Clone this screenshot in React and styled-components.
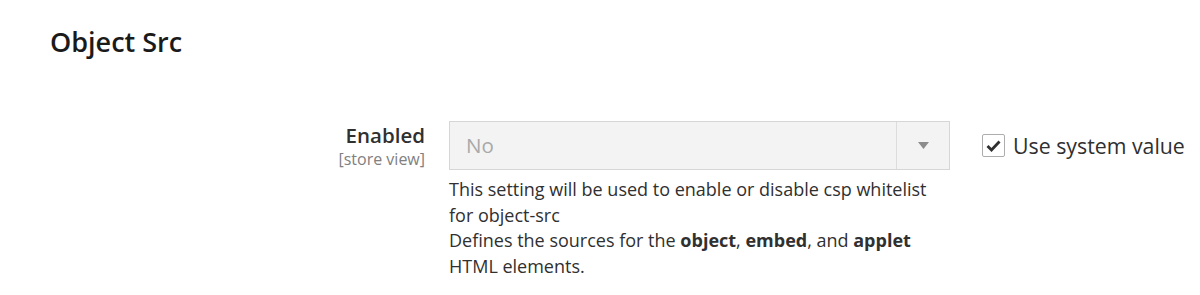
import React from 'react';
import styled, { createGlobalStyle } from 'styled-components';

const GlobalStyle = createGlobalStyle`
  body {
    margin: 0;
    background: #ffffff;
    font-family: "Open Sans", "Liberation Sans", sans-serif;
    color: #303030;
  }
`

const Section = styled.div`
  padding: 24px 0 0 50px;
`

const Title = styled.h2`
  margin: 0;
  font-size: 27px;
  font-weight: 600;
  line-height: 36px;
  color: #1a1a1a;
`

const FieldRow = styled.div`
  display: grid;
  grid-template-columns: 375px 501px auto;
  column-gap: 24px;
  margin-top: 61px;
`

const Label = styled.div`
  text-align: right;
`

const LabelText = styled.div`
  font-size: 20.5px;
  font-weight: 600;
  line-height: 28px;
  color: #303030;
`

const Scope = styled.div`
  font-size: 16px;
  line-height: 20px;
  color: #808080;
`

const Control = styled.div`
  display: flex;
  flex-direction: column;
`

const Select = styled.div`
  display: flex;
  height: 49px;
  box-sizing: border-box;
  border: 1px solid #d6d6d6;
  background: #f3f3f3;
`

const SelectValue = styled.div`
  flex: 1;
  padding-left: 16px;
  font-size: 20.5px;
  line-height: 47px;
  color: #a9a9a9;
`

const SelectArrow = styled.div`
  width: 52px;
  border-left: 1px solid #dcdcdc;
  display: flex;
  align-items: center;
  justify-content: center;
`

const Note = styled.div`
  margin-top: 7px;
  font-size: 18px;
  line-height: 25.5px;
  color: #303030;
  b {
    font-weight: 700;
  }
`

const UseDefault = styled.label`
  display: flex;
  align-items: center;
  gap: 8px;
  height: 49px;
  margin-left: 8px;
  font-size: 21.3px;
  color: #303030;
`

const Box = styled.span`
  width: 23px;
  height: 23px;
  box-sizing: border-box;
  border: 1px solid #adadad;
  border-radius: 2px;
  background: #fff;
  display: flex;
  align-items: center;
  justify-content: center;
`

export default function App() {
  return (
    <>
      <GlobalStyle />
      <Section>
        <Title>Object Src</Title>
        <FieldRow>
          <Label>
            <LabelText>Enabled</LabelText>
            <Scope>[store view]</Scope>
          </Label>
          <Control>
            <Select>
              <SelectValue>No</SelectValue>
              <SelectArrow>
                <svg width="11" height="7" viewBox="0 0 11 7">
                  <path d="M0 0 H11 L5.5 7 Z" fill="#8c8c8c" />
                </svg>
              </SelectArrow>
            </Select>
            <Note>
              This setting will be used to enable or disable csp whitelist for object-src<br />
              Defines the sources for the <b>object</b>, <b>embed</b>, and <b>applet</b> HTML elements.
            </Note>
          </Control>
          <UseDefault>
            <Box>
              <svg width="15" height="12" viewBox="0 0 15 12">
                <path d="M1.5 6 L5.5 10 L13.5 1.5" fill="none" stroke="#303030" strokeWidth="2.8" />
              </svg>
            </Box>
            Use system value
          </UseDefault>
        </FieldRow>
      </Section>
    </>
  );
}
